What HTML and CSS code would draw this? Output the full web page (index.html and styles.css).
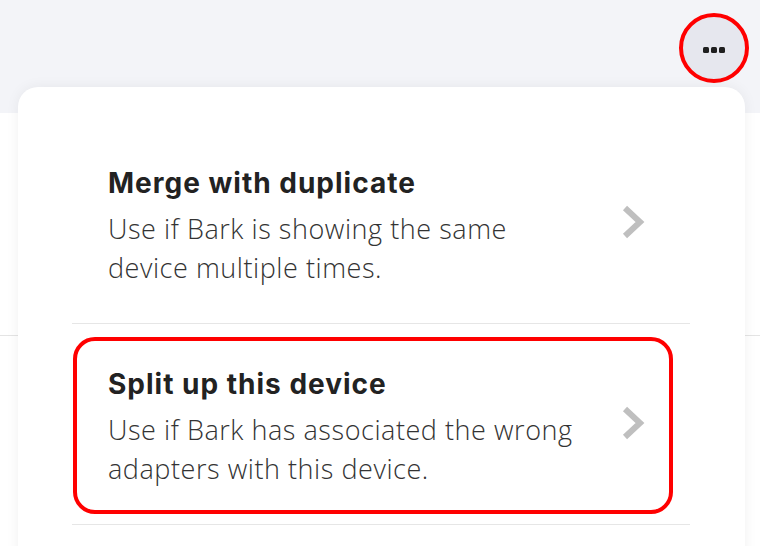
FILE: index.html
```html
<!DOCTYPE html>
<html>
<head>
	<title>Device options</title>
	<link rel="stylesheet" href="styles.css">
</head>
<body>
	<header class="topbar">
		<button type="button" class="more-btn" aria-label="More options">
			<span class="dot"></span><span class="dot"></span><span class="dot"></span>
		</button>
	</header>
	<div class="page-row"></div>

	<div class="sheet">
		<ul class="menu">
			<li class="menu-item">
				<div class="item-text">
					<h2>Merge with duplicate</h2>
					<p>Use if Bark is showing the same<br>device multiple times.</p>
				</div>
				<svg class="chevron" width="26" height="36" viewBox="0 0 26 36">
					<polyline points="4,4 19,18 4,32" fill="none" stroke="#bfbfbf" stroke-width="6"/>
				</svg>
			</li>
			<li class="menu-item">
				<div class="item-text">
					<h2>Split up this device</h2>
					<p>Use if Bark has associated the wrong<br>adapters with this device.</p>
				</div>
				<svg class="chevron" width="26" height="36" viewBox="0 0 26 36">
					<polyline points="4,4 19,18 4,32" fill="none" stroke="#bfbfbf" stroke-width="6"/>
				</svg>
				<div class="highlight"></div>
			</li>
		</ul>
	</div>
</body>
</html>
```

FILE: styles.css
```css
body {
	margin: 0;
	background: #fff;
	font-family: "Open Sans", "Noto Sans", sans-serif;
	overflow: hidden;
	height: 546px;
}

.topbar {
	height: 113px;
	background: #f3f4f8;
	display: flex;
	justify-content: flex-end;
	align-items: flex-start;
	padding: 13px 11px 0 0;
	box-sizing: border-box;
}

.more-btn {
	width: 70px;
	height: 70px;
	border-radius: 50%;
	border: 4px solid #ff0000;
	background: #e6e7ee;
	display: flex;
	align-items: center;
	justify-content: center;
	gap: 1.5px;
	padding: 4px 0 0 0;
	box-sizing: border-box;
	cursor: pointer;
}

.dot {
	width: 6.5px;
	height: 6.5px;
	border-radius: 1.5px;
	background: #1f1f1f;
}

.page-row {
	height: 222px;
	border-bottom: 1px solid #e4e4e4;
}

.sheet {
	position: absolute;
	left: 18px;
	top: 87px;
	width: 727px;
	height: 480px;
	background: #fff;
	border-radius: 20px 20px 0 0;
	box-shadow: 0 0 14px rgba(0, 0, 0, 0.06);
	padding: 36px 55px 0 54px;
	box-sizing: border-box;
}

.menu {
	list-style: none;
	margin: 0;
	padding: 0;
}

.menu-item {
	position: relative;
	height: 201px;
	border-bottom: 1px solid #e6e6e6;
	display: flex;
	align-items: center;
	justify-content: space-between;
	padding: 0 43px 0 36px;
	box-sizing: border-box;
}

.item-text {
	margin-top: 6px;
}

.item-text h2 {
	margin: 0 0 9px 0;
	font-family: Inter, sans-serif;
	font-weight: 700;
	font-size: 28px;
	line-height: 34px;
	color: #222;
	letter-spacing: 1px;
}

.item-text p {
	margin: 0;
	font-weight: 300;
	font-size: 27px;
	line-height: 39px;
	color: #333;
	letter-spacing: 0.55px;
}

.chevron {
	display: block;
	margin-top: -2px;
}

.highlight {
	position: absolute;
	left: 1px;
	right: 17px;
	top: 13px;
	bottom: 10px;
	border: 4px solid #ff0000;
	border-radius: 22px;
	pointer-events: none;
}
```
